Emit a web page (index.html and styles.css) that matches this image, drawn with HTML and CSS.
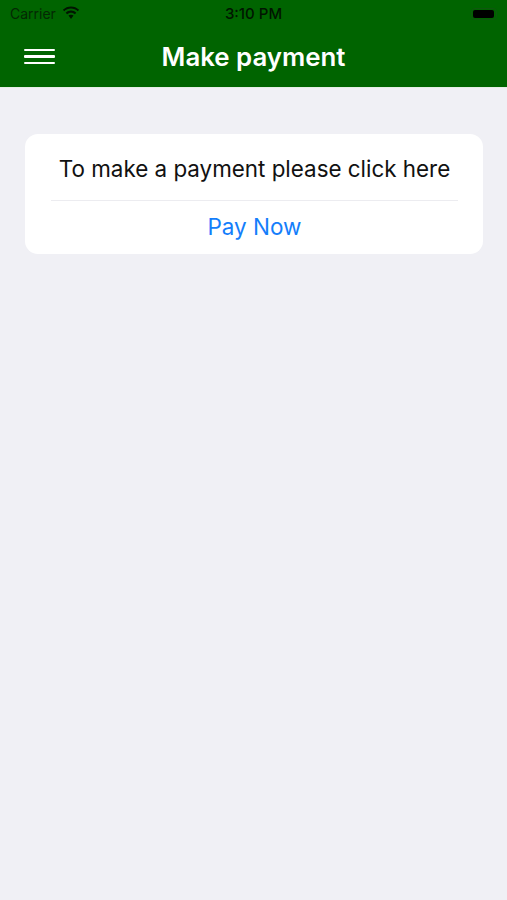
FILE: index.html
```html
<!DOCTYPE html>
<html lang="en">
<head>
    <meta charset="UTF-8">
    <meta name="viewport" content="width=device-width, initial-scale=1.0">
    <title>Make payment</title>
    <link rel="stylesheet" href="styles.css">
</head>
<body>
    <!-- Green header with status bar -->
    <header class="header">
        <div class="status-bar">
            <div class="status-left">
                <span class="carrier">Carrier</span>
                <svg class="wifi" width="18" height="14" viewBox="0 0 18 14">
                    <path d="M9 2.6c2.6 0 5 1 6.8 2.7l1.3-1.5C14.900 1.700 12.100.5 9 .5S3.100 1.700.9 3.800l1.300 1.500C4 3.600 6.400 2.600 9 2.600z"/>
                    <path d="M9 6.700c1.500 0 2.900.6 3.900 1.500l1.400-1.500C12.900 5.400 11 4.600 9 4.600s-3.900.8-5.300 2.100l1.400 1.500c1-.9 2.400-1.500 3.900-1.500z"/>
                    <path d="M9 8.700c-1 0-1.900.4-2.500.9L9 13l2.500-3.400C10.900 9.100 10 8.700 9 8.700z"/>
                </svg>
            </div>
            <span class="time">3:10 PM</span>
            <div class="battery"><div class="battery-level"></div></div>
        </div>
        <div class="nav-bar">
            <button class="menu-btn">
                <span></span>
                <span></span>
                <span></span>
            </button>
            <h1 class="title">Make payment</h1>
        </div>
    </header>

    <!-- Payment card -->
    <main class="content">
        <div class="card">
            <p class="card-text">To make a payment please click here</p>
            <a class="pay-link">Pay Now</a>
        </div>
    </main>
</body>
</html>
```

FILE: styles.css
```css
/* Reset some default styles */
body, h1, p {
    margin: 0;
    padding: 0;
}

body {
    background-color: #f0f0f5;
    color: #111;
    font-family: "Inter", "Liberation Sans", sans-serif;
    height: 900px;
    overflow: hidden;
}

/* Header */
.header {
    background-color: #006400;
    height: 87px;
    border-bottom: 1px solid #e4efe4;
}

.status-bar {
    display: grid;
    grid-template-columns: 1fr auto 1fr;
    align-items: center;
    height: 27px;
    padding: 0 10px;
    font-size: 14px;
}

.status-left {
    display: flex;
    align-items: center;
    gap: 6px;
}

.carrier {
    color: #042804;
}

.wifi {
    fill: #011501;
    margin-top: -2px;
}

.time {
    color: #011501;
    font-size: 15px;
    font-weight: 500;
}

.battery {
    justify-self: end;
    width: 26px;
    height: 12px;
    border: 1px solid #0f570f;
    border-radius: 4px;
    padding: 1px 2px 1px 1px;
    box-sizing: border-box;
}

.battery-level {
    background-color: #000;
    height: 100%;
    border-radius: 2px;
}

.nav-bar {
    display: flex;
    align-items: center;
    height: 60px;
    position: relative;
}

.menu-btn {
    display: flex;
    flex-direction: column;
    gap: 4px;
    background: none;
    border: none;
    padding: 0;
    margin-left: 24px;
    margin-top: -1px;
    width: 31px;
}

.menu-btn span {
    display: block;
    height: 2.600px;
    background-color: #fff;
    border-radius: 1px;
}

.title {
    position: absolute;
    left: 0;
    right: 0;
    text-align: center;
    color: #fff;
    font-size: 25.800px;
    font-weight: 600;
    margin-top: -1px;
}

/* Card */
.content {
    padding: 46px 24px 0 25px;
}

.card {
    background-color: #fff;
    border-radius: 13px;
    height: 120px;
    padding: 0 25px 0 26px;
    box-sizing: border-box;
    text-align: center;
}

.card-text {
    font-size: 22.400px;
    height: 66px;
    line-height: 69px;
    border-bottom: 1px solid #ececf0;
    white-space: nowrap;
}

.pay-link {
    display: block;
    color: #147efb;
    font-size: 22.500px;
    line-height: 51px;
}
```
